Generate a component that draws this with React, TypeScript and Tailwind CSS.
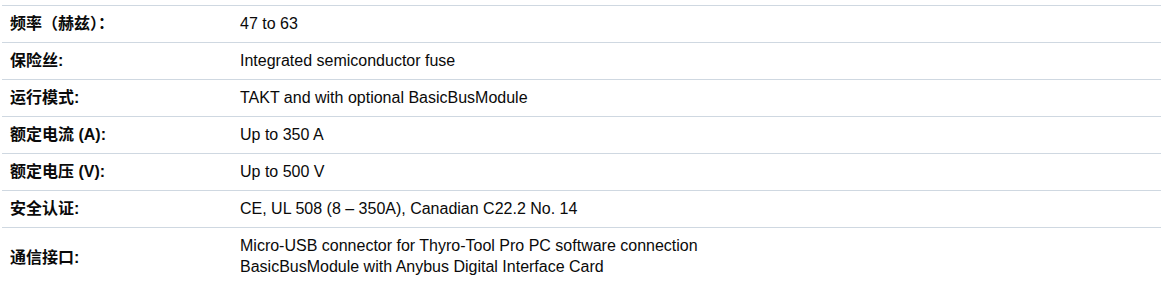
const rows: { label: string; value: string[] }[] = [
  { label: "频率（赫兹）：", value: ["47 to 63"] },
  { label: "保险丝:", value: ["Integrated semiconductor fuse"] },
  { label: "运行模式:", value: ["TAKT and with optional BasicBusModule"] },
  { label: "额定电流 (A):", value: ["Up to 350 A"] },
  { label: "额定电压 (V):", value: ["Up to 500 V"] },
  { label: "安全认证:", value: ["CE, UL 508 (8 – 350A), Canadian C22.2 No. 14"] },
  {
    label: "通信接口:",
    value: [
      "Micro-USB connector for Thyro-Tool Pro PC software connection",
      "BasicBusModule with Anybus Digital Interface Card",
    ],
  },
]

export default function App() {
  return (
    <div className="bg-white w-[1163px] h-[287px] pt-[5px] pl-[2px] pr-[2px] text-[16px] text-[#0a0a0a] font-['Liberation_Sans','Noto_Sans_CJK_SC',sans-serif]">
      <table className="w-[1159px] border-collapse">
        <tbody>
          {rows.map((r, i) => (
            <tr key={i} className="border-t border-[#cfd8e1]">
              <td className="w-[230px] px-[8px] py-[8px] leading-[20px] font-bold align-middle">{r.label}</td>
              <td className={`px-[8px] align-middle ${r.value.length > 1 ? "pt-[7px] pb-[10px] leading-[21px]" : "py-[8px] leading-[20px]"}`}>
                {r.value.map((v, j) => (
                  <div key={j}>{v}</div>
                ))}
              </td>
            </tr>
          ))}
        </tbody>
      </table>
    </div>
  )
}
